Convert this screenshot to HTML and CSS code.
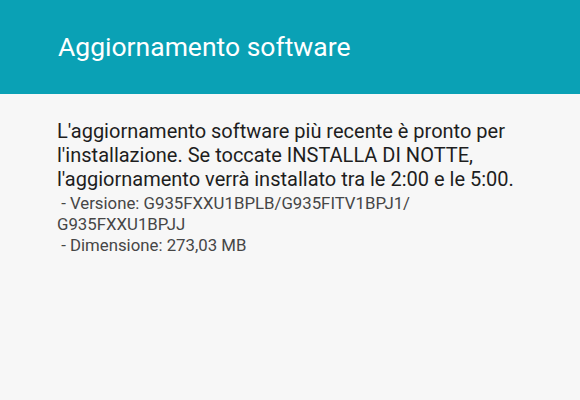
FILE: index.html
```html
<!DOCTYPE html>
<html lang="it">
<head>
<meta charset="utf-8">
<link rel="stylesheet" href="styles.css">
</head>
<body>
<header class="appbar">
  <h1 class="title">Aggiornamento software</h1>
</header>
<main class="content">
  <p class="lead">L'aggiornamento software più recente è pronto per l'installazione. Se toccate INSTALLA DI NOTTE, l'aggiornamento verrà installato tra le 2:00 e le 5:00.</p>
  <p class="detail">&nbsp;- Versione: G935FXXU1BPLB/G935FITV1BPJ1/<br>G935FXXU1BPJJ</p>
  <p class="detail">&nbsp;- Dimensione: 273,03 MB</p>
</main>
</body>
</html>
```
FILE: styles.css
```css
html, body {
  margin: 0;
  padding: 0;
  width: 580px;
  height: 400px;
  overflow: hidden;
  background: #f7f7f7;
  font-family: Roboto, "Noto Sans", sans-serif;
}
.appbar {
  background: #0aa1b5;
  height: 94px;
  box-sizing: border-box;
  padding: 32px 0 0 58px;
}
.title {
  margin: 0;
  font-weight: 400;
  font-size: 26.5px;
  line-height: 30px;
  color: #ffffff;
}
.content {
  padding: 25px 30px 0 57px;
}
.lead {
  margin: 0 0 2px 0;
  font-size: 20px;
  line-height: 24px;
  color: #1e1e1e;
}
.detail {
  margin: 0;
  font-size: 16.8px;
  line-height: 21px;
  color: #464646;
}
```
